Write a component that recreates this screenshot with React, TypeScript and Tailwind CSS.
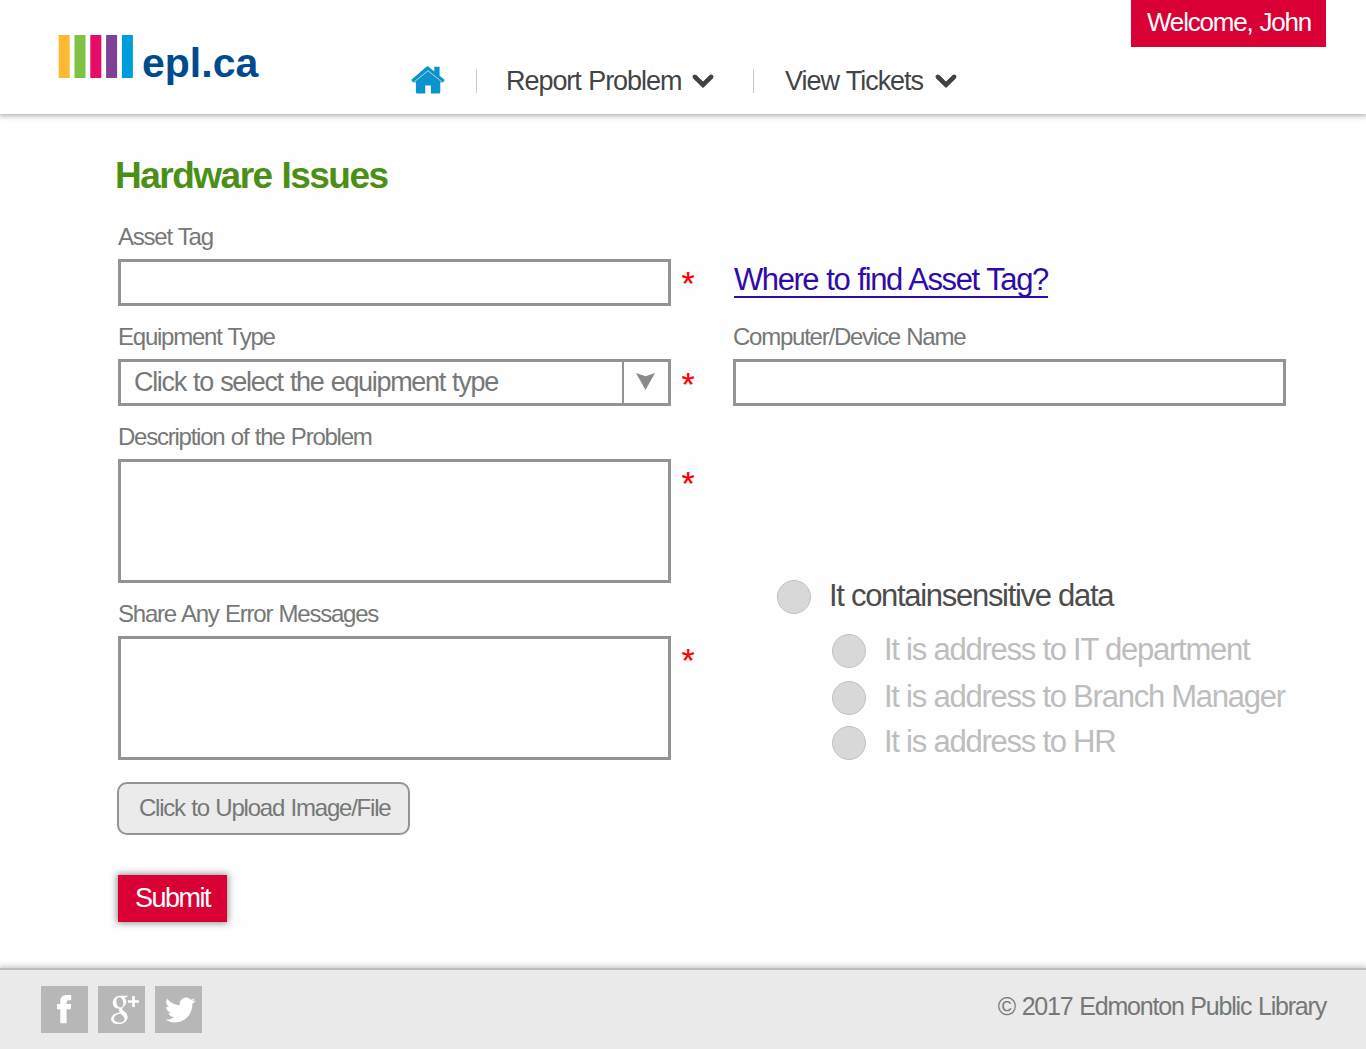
import React from 'react';
import type { ReactNode } from 'react';

function LogoBars() {
  return (
    <svg className="ml-[58px] mt-[35px] shrink-0" width="76" height="43" viewBox="0 0 76 43">
      <rect x="0.7" y="0" width="11" height="43" fill="#fdb930" />
      <rect x="16.5" y="0" width="11" height="43" fill="#7dc242" />
      <rect x="32.3" y="0" width="11" height="43" fill="#e70d66" />
      <rect x="48.1" y="0" width="11" height="43" fill="#7f4097" />
      <rect x="63.9" y="0" width="11" height="43" fill="#009ddc" />
    </svg>
  );
}

function HomeIcon() {
  return (
    <svg className="relative -top-px" width="34" height="28" viewBox="0 0 34 28" fill="#0a93cd">
      <path d="M17 0.2 23.3 5.4V0.8H28.6V9.7L33.8 14.1 31.8 16.4 17 4.4 2.2 16.4 0.2 14.1 15.1 1Q17 -0.4 18.9 1Z" />
      <path d="M2.2 16.4 17 4.4 31.8 16.4 29.3 16.2V26Q29.3 27.6 27.9 27.6H19.9V19.6H14.3V27.6H6.3Q4.9 27.6 4.9 26V16.2Z" />
      <path d="M2.8 16.2 17 4.8 31.2 16.2" fill="none" stroke="#9fd3ea" strokeWidth="1" />
    </svg>
  );
}

function Chevron() {
  return (
    <svg width="22" height="14" viewBox="0 0 22 14" fill="none" stroke="#404244" strokeWidth="4.4">
      <path d="M2.4 2.4 11 10.8 19.6 2.4" strokeLinecap="butt" strokeLinejoin="miter" />
      <path d="M2.6 2.6 11 10.8 19.4 2.6" strokeWidth="4" strokeLinecap="round" strokeLinejoin="round" />
    </svg>
  );
}

function Field({ label, children, required = false, star = '' }: { label: string; children: ReactNode; required?: boolean; star?: string }) {
  return (
    <div>
      <label className="block h-[45px] text-[24px] leading-[45px] tracking-[-1.24px] text-[#757877] [word-spacing:1px]">{label}</label>
      <div className="flex">
        {children}
        {required && <span className={`ml-[10.5px] h-[36px] text-[34px] leading-[36px] text-[#ff0000] [-webkit-text-stroke:0.2px_#ff0000] ${star}`}>*</span>}
      </div>
    </div>
  );
}

function Radio({ label, className, textClass }: { label: string; className: string; textClass: string }) {
  return (
    <div className={`flex h-[34px] items-start ${className}`}>
      <span className="size-[34px] shrink-0 rounded-full border border-[#c2c2c2] bg-[#d8d8d8]" />
      <span className={`whitespace-nowrap text-[31px] leading-[32px] ${textClass}`}>{label}</span>
    </div>
  );
}

export default function App() {
  return (
    <div className="flex h-[1049px] w-[1366px] flex-col overflow-hidden bg-[#fefefe] font-['Liberation_Sans',Arial,sans-serif]">
      <header className="flex h-[114px] shrink-0 items-start bg-white shadow-[0_1px_5px_1px_rgba(0,0,0,0.3)]">
        <LogoBars />
        <span className="ml-[8px] mt-[38px] w-[119px] text-[41px] font-bold leading-[50px] text-[#004b8d]">epl.ca</span>
        <nav className="ml-[150px] mt-[65px] flex h-[32px] items-center whitespace-nowrap text-[27px] leading-[32px] text-[#414445] [word-spacing:1px]">
          <HomeIcon />
          <span className="ml-[31px] h-[24px] w-px bg-[#c9c9c9]" />
          <span className="ml-[29px] w-[176px] tracking-[-1.05px]">Report Problem</span>
          <span className="ml-[10px]"><Chevron /></span>
          <span className="ml-[39px] h-[24px] w-px bg-[#c9c9c9]" />
          <span className="ml-[31px] w-[140px] tracking-[-1.05px]">View Tickets</span>
          <span className="ml-[10px]"><Chevron /></span>
        </nav>
        <div className="ml-auto mr-[40px] h-[47px] w-[195px] whitespace-nowrap bg-[#d90036] pl-[16px] text-[26px] leading-[44px] tracking-[-1.2px] text-white [word-spacing:1px]">Welcome, John</div>
      </header>

      <main className="flex grow flex-col">
        <h1 className="ml-[115px] mt-[37px] h-[50px] text-[37px] font-bold leading-[50px] tracking-[-1.5px] text-[#4b8f17] [word-spacing:1px]">Hardware Issues</h1>
        <div className="ml-[118px] mt-[13px] flex">
          <div className="flex w-[615px] flex-col">
            <Field label="Asset Tag" required star="mt-[6px]">
              <div className="h-[47px] w-[553px] border-[3px] border-[#939393]" />
            </Field>
            <div className="mt-[8px]">
              <Field label="Equipment Type" required star="mt-[7px]">
                <div className="flex h-[47px] w-[553px] border-[3px] border-[#939393]">
                  <span className="w-[501px] whitespace-nowrap pl-[13px] text-[27px] leading-[40px] tracking-[-1.32px] text-[#757877] [word-spacing:1px]">Click to select the equipment type</span>
                  <span className="flex grow border-l-2 border-[#939393] pl-[12px] pt-[11px]">
                    <svg width="19" height="17" viewBox="0 0 19 17" fill="#8a8a8a"><path d="M0 0 9.5 3.2 19 0 9.5 17Z" /></svg>
                  </span>
                </div>
              </Field>
            </div>
            <div className="mt-[8px]">
              <Field label="Description of the Problem" required star="mt-[6px]">
                <div className="h-[124px] w-[553px] border-[3px] border-[#939393]" />
              </Field>
            </div>
            <div className="mt-[8px]">
              <Field label="Share Any Error Messages" required star="mt-[6px]">
                <div className="h-[124px] w-[553px] border-[3px] border-[#939393]" />
              </Field>
            </div>
            <button className="-ml-px mt-[22px] h-[53px] w-[293px] whitespace-nowrap rounded-[10px] border-2 border-[#939393] bg-[#ebebeb] pb-[2px] pl-[20px] text-left text-[24px] leading-[47px] tracking-[-1.22px] text-[#757877] [word-spacing:1px]">Click to Upload Image/File</button>
            <button className="mt-[40px] h-[47px] w-[109px] bg-[#d90036] pb-[2px] pl-[17px] text-left text-[27px] leading-[44px] tracking-[-1.5px] text-white shadow-[0_0_7px_1px_rgba(0,0,0,0.45)]">Submit</button>
          </div>
          <div className="w-[553px]">
            <div className="h-[100px] pl-px pt-[48px]">
              <a className="inline-block h-[36px] whitespace-nowrap border-b-2 border-[#2e0ba8] text-[31px] leading-[35px] tracking-[-1.43px] text-[#2e0ba8] [word-spacing:1px]">Where to find Asset Tag?</a>
            </div>
            <Field label="Computer/Device Name">
              <div className="h-[47px] w-[553px] border-[3px] border-[#939393]" />
            </Field>
            <Radio label="It containsensitive data" className="ml-[44px] mt-[174px]" textClass="ml-[18px] tracking-[-1.3px] text-[#4c4c4c]" />
            <Radio label="It is address to IT department" className="ml-[99px] mt-[20px]" textClass="ml-[18px] tracking-[-1.24px] text-[#bdbdbd]" />
            <Radio label="It is address to Branch Manager" className="ml-[99px] mt-[13px]" textClass="ml-[18px] tracking-[-1.24px] text-[#bdbdbd]" />
            <Radio label="It is address to HR" className="ml-[99px] mt-[11px]" textClass="ml-[18px] tracking-[-1.24px] text-[#bdbdbd]" />
          </div>
        </div>
      </main>

      <footer className="flex h-[81px] shrink-0 items-start border-t-2 border-[#bcbcbc] bg-[#eaeaea] pl-[41px] pr-[40px] pt-[16px] shadow-[0_-1px_5px_1px_rgba(0,0,0,0.2)]">
        <div className="flex gap-[10px]">
          <a className="block size-[47px] bg-[#b7b7b7]">
            <svg width="47" height="47" viewBox="0 0 47 47" fill="#fff"><path d="M19.3 37.2V23.2H16V18H19.3V15.5Q19.3 9 25.2 9H30.2V14.2H27.6Q25.6 14.2 25.6 16.2V18H30.2L29.7 23.2H25.6V37.2Z" /></svg>
          </a>
          <a className="block size-[47px] bg-[#b7b7b7]">
            <svg width="47" height="47" viewBox="0 0 47 47">
              <path
                fill="#fff"
                fillRule="evenodd"
                d="M22 9.8H30.2L28.2 11.4H26.2C30.2 15 28 19 25.4 21C23.2 23 24 24 26 25.2C32.6 29.2 29.6 38 20.6 38C11 38 11.2 29.2 18.4 27.2C19.8 26.8 21 26.7 22 26.6C20.8 25.2 20.6 24.2 21.2 22.8C12.6 23 12.4 10.6 22 9.8ZM21 11.2C16.4 11.8 18.2 21.6 22.6 21.5C27.4 21.2 25.6 11 21 11.2ZM22.6 27.9C14 28 13.8 36.4 21.4 36.5C28 36.6 28.2 31.4 22.6 27.9Z"
              />
              <path fill="#fff" d="M34.2 10H36.8V14.2H41V16.8H36.8V21H34.2V16.8H30V14.2H34.2Z" />
            </svg>
          </a>
          <a className="block size-[47px] bg-[#b7b7b7]">
            <svg width="47" height="47" viewBox="0 0 47 47" fill="#fff">
              <path transform="translate(10 8.8) scale(1.27)" d="M23.95 4.57a10 10 0 0 1-2.82.77 4.96 4.96 0 0 0 2.16-2.72c-.95.55-2 .95-3.13 1.18a4.92 4.92 0 0 0-8.38 4.48C7.69 8.1 4.07 6.13 1.64 3.16a4.92 4.92 0 0 0 1.52 6.57 4.9 4.9 0 0 1-2.23-.61v.06a4.92 4.92 0 0 0 3.95 4.83 5 5 0 0 1-2.21.08 4.94 4.94 0 0 0 4.6 3.42A9.87 9.87 0 0 1 0 19.54a13.99 13.99 0 0 0 7.56 2.21c9.05 0 14-7.5 14-13.98 0-.21 0-.42-.02-.63a9.94 9.94 0 0 0 2.46-2.55z" />
            </svg>
          </a>
        </div>
        <span className="ml-auto whitespace-nowrap text-[25px] leading-[41px] tracking-[-1.2px] text-[#757877] [word-spacing:1px]">© 2017 Edmonton Public Library</span>
      </footer>
    </div>
  );
}
